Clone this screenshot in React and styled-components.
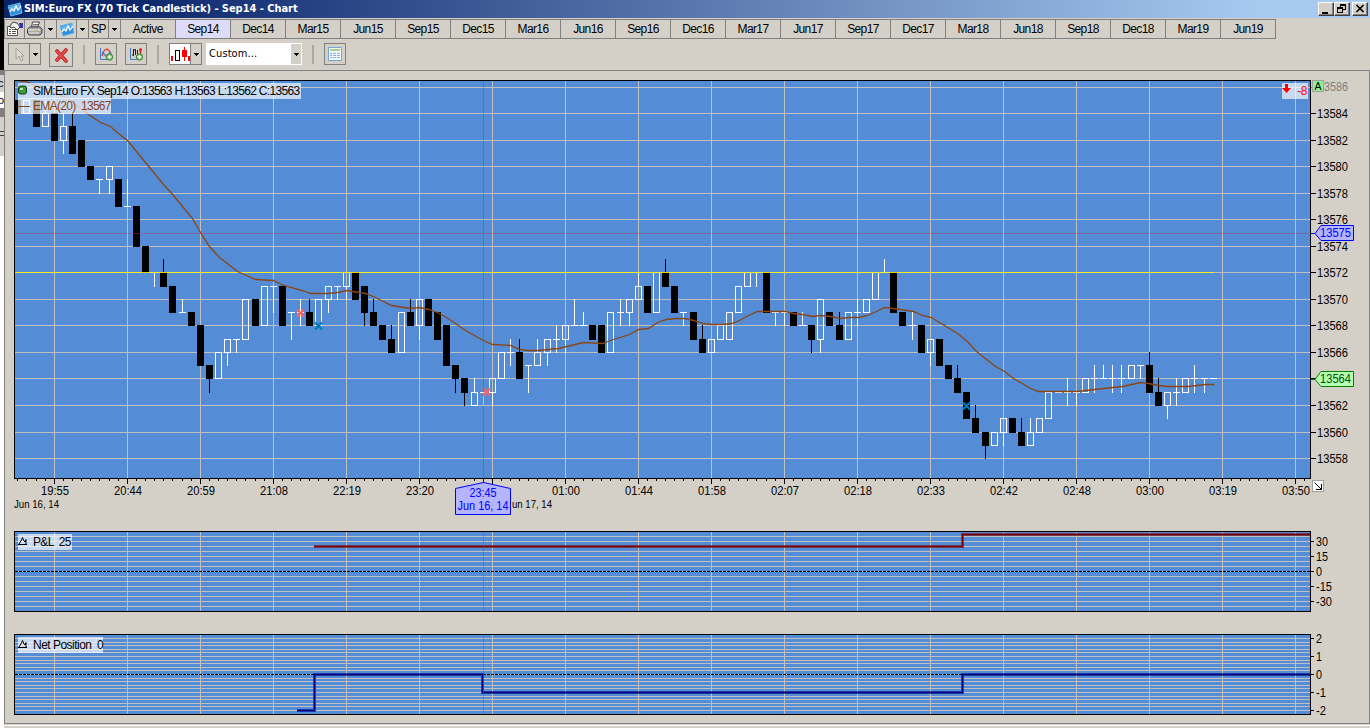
import { Fragment } from 'react';
import styled, { createGlobalStyle } from 'styled-components';

const GlobalStyle = createGlobalStyle`
  * {
    box-sizing: border-box;
  }
  body {
    margin: 0;
    overflow: hidden;
    background: #d4d0c8;
    font-family: 'Liberation Sans', Arial, sans-serif;
    font-size: 12px;
    color: #000;
  }
  svg {
    display: block;
  }
  svg text {
    font-family: 'Liberation Sans', Arial, sans-serif;
  }
`;

const Screen = styled.div`
  display: grid;
  grid-template-columns: 4px 1366px;
  width: 1370px;
  height: 728px;
`;

const Behind = styled.div`
  display: flex;
  flex-direction: column;
  overflow: hidden;
`;

const BehindBlock = styled.div`
  flex: none;
  height: ${({ $h }) => $h}px;
  background: ${({ $bg }) => $bg || '#d4d0c8'};
  font-size: 11px;
  line-height: ${({ $h }) => $h}px;
  text-indent: -2px;
`;

const Window = styled.div`
  display: flex;
  flex-direction: column;
  height: 728px;
`;

const TitleBar = styled.div`
  display: flex;
  align-items: center;
  height: 18px;
  padding: 0 2px 0 3px;
  background: linear-gradient(90deg, #0a246a 0%, #0a246a 8%, #a6caf0 92%);
`;

const Title = styled.h1`
  flex: 1;
  margin: 0 0 0 1px;
  font: bold 11px/16px 'DejaVu Sans Condensed', 'DejaVu Sans', sans-serif;
  font-stretch: condensed;
  letter-spacing: -0.04px;
  white-space: pre;
  color: #fff;
`;

const WindowButton = styled.button`
  width: 16px;
  height: 14px;
  padding: 0;
  margin-left: ${({ $gap }) => $gap || 0}px;
  border: 1px solid;
  border-color: #fff #404040 #404040 #fff;
  background: #d4d0c8;
  box-shadow: inset -1px -1px #808080;
`;

const TabBar = styled.div`
  display: flex;
  height: 20px;
  margin-top: 1px;
`;

const Cell = styled.div`
  display: flex;
  align-items: center;
  justify-content: center;
  width: ${({ $w }) => $w}px;
  border: 1px solid #808080;
  border-left-width: ${({ $first }) => ($first ? 1 : 0)}px;
  letter-spacing: -0.5px;
`;

const Tab = styled.div`
  width: 55px;
  border: 1px solid #808080;
  border-left: 0;
  background: ${({ $active }) => ($active ? '#dcdcf8' : 'transparent')};
  line-height: 19px;
  text-align: center;
  letter-spacing: ${({ $wide }) => ($wide ? -0.4 : -0.6)}px;
`;

const ToolBar = styled.div`
  display: flex;
  align-items: flex-start;
  height: 31px;
  padding: 4px 0 0 4px;
`;

const ToolButton = styled.div`
  display: flex;
  align-items: center;
  justify-content: center;
  width: ${({ $w }) => $w || 22}px;
  height: ${({ $h }) => $h || 22}px;
  margin-left: ${({ $gap }) => $gap || 0}px;
  border: 1px solid #808080;
  ${({ $joined }) => $joined && 'border-left: 0;'}
  ${({ $bg }) => $bg && `background: ${$bg};`}
`;

const Separator = styled.div`
  width: 2px;
  height: 19px;
  margin: 2px 0 0 10px;
  background: #aca8a0;
`;

const Select = styled.div`
  display: flex;
  justify-content: space-between;
  width: 96px;
  height: 22px;
  margin-left: 4px;
  padding: 1px 1px 1px 3px;
  background: #fff;
  font: 11px/20px 'DejaVu Sans Condensed', 'DejaVu Sans', sans-serif;
  font-stretch: condensed;
  letter-spacing: 0.1px;
`;

const SelectArrow = styled.div`
  display: flex;
  align-items: center;
  justify-content: center;
  width: 10px;
  background: #d4d0c8;
`;

const ChartArea = styled.main`
  height: 654px;
  padding: 9px 0 0 9px;
  border: 1px solid #808080;
`;

const Pane = styled.section`
  position: relative;
  display: grid;
  grid-template-columns: 1297px 58px;
  margin-bottom: ${({ $gap }) => $gap || 0}px;
`;

const Legends = styled.div`
  position: absolute;
  top: 3px;
  left: 4px;
  display: flex;
  flex-direction: column;
  align-items: flex-start;
`;

const Legend = styled.div`
  display: flex;
  align-items: center;
  width: ${({ $w }) => $w}px;
  height: 16px;
  margin-bottom: -1px;
  background: rgba(255, 255, 255, 0.68);
  color: ${({ $color }) => $color || '#000'};
  letter-spacing: ${({ $track }) => $track || -0.5}px;
  line-height: 16px;
  white-space: pre;
`;

const LegendIcon = styled.span`
  flex: none;
  width: 15px;
`;

const Change = styled.div`
  position: absolute;
  top: 3px;
  left: 1268px;
  display: flex;
  justify-content: space-between;
  width: 26px;
  height: 16px;
  padding-right: 1px;
  background: rgba(255, 255, 255, 0.68);
  color: #f00;
  line-height: 17px;
  letter-spacing: -0.5px;
`;

const StatusEdge = styled.div`
  height: 4px;
  border-top: 1px solid #d4d0c8;
  box-shadow: inset 0 1px #fff;
`;

const contracts = [
  'Active', 'Sep14', 'Dec14', 'Mar15', 'Jun15', 'Sep15', 'Dec15',
  'Mar16', 'Jun16', 'Sep16', 'Dec16', 'Mar17', 'Jun17', 'Sep17', 'Dec17',
  'Mar18', 'Jun18', 'Sep18', 'Dec18', 'Mar19', 'Jun19',
];

// one entry per bar: colour, body top, body bottom, high, low (prices - 13500)
const bars = `
b85,84 w85,84 b85,83 w84,83,85 b84,82 w83,82,84,81 b83,81,84 b82,80
b80,79 w79,79,79,78 w80,79,80,78 b79,77 w77,77,79 b77,74 b74,72 w72,72,72,71
b72,71,73 b71,69 w69,69,70 b69,68 b68,65 b65,64,65,63 w66,64 w67,66,67,65
w67,67,67,66 w70,67 b70,68 w71,68 w71,71,71,69 b71,68 w69,69,69,67 w69,69,70,68
b69,68,70 w70,68 w71,70,71,69 w71,71,71,70 w72,71,72,70 b72,70 b71,69,71,68 b69,68,70
b68,67 b67,66,68 w69,66 b69,68,70 w70,68,70,67 b70,68 b69,67 b68,65
b65,64,65,63 b64,63,64,62 w63,62,64 w63,63,63,62 w64,63,64,62 w66,64 w66,66,67,65 b66,64,67
w65,65,65,63 w66,65,67 w67,66,67,65 w67,67,68,66 w68,67,68,66 w68,68,70 w68,68,69 b68,67
b68,66 w69,66 w69,69,70,68 w70,69,70,68 w71,70,72 b71,69 w72,69 b72,71,73
b71,69 w69,69,69,68 b69,67 b67,66,68 w67,66 w68,67 w69,67 w71,69
w72,71 w72,72,72,71 b72,69 w69,69,69,68 w69,69,69,68 b69,68 w68,68,69 b68,67,68,66
w70,67,70,66 b69,68 b68,67,69 w69,67 w69,69,70,68 w70,69 w72,70 w72,72,73
b72,69 b69,68 w68,68,69,67 b68,66 w67,66,67,65 b67,65 b65,64 b64,63,65
b63,61 b61,60,62 b60,59,60,58 w60,59 w61,60,61,59 b61,60 b60,59,61 w60,59,61
w61,60 w63,61 w63,63 w63,63,64,62 w63,63,63,62 w64,63 w64,64,65,63 w64,64,65
w64,64,65,63 w64,64,65,63 w65,64 w65,65,65,64 b65,63,66 b63,62,64 w63,62,63,61 w63,63,64,62
w64,63 w64,64,65,63 w64,64,64,63 w64,64
`
  .trim()
  .split(/\s+/)
  .map((entry, i) => {
    const [top, bottom, high = top, low = bottom] = entry.slice(1).split(',').map(Number);
    return { k: i - 4, up: entry[0] === 'w', top, bottom, high, low };
  });

const ema =
  '17,80 25,81 45,89 67,98 88,114 100,122 110,126 118,133 127,140 136,151 145,162 163,184 173,195 182,206 192,218 200,232 209,246 219,257 228,264 237,271 246,275 255,279 273,280 283,285 302,290 310,293 328,293 337,292 346,290 365,293 375,297 391,305 410,308 419,307 428,309 437,312 446,317 455,323 465,330 474,335 483,340 492,344 510,345 519,349 527,350 538,350 558,348 583,342 602,343 610,340 629,334 638,329 648,328 657,322 666,319 675,318 684,318 693,320 703,323 712,324 722,324 731,323 739,320 748,315 757,311 785,311 793,313 802,314 812,316 820,315 830,316 840,318 848,317 858,317 867,315 876,311 884,307 893,308 913,311 922,315 931,317 939,322 949,328 957,333 967,341 976,351 986,359 995,366 1004,371 1013,378 1022,383 1030,388 1038,391 1077,391 1103,388 1122,386 1140,382 1148,383 1158,385 1167,386 1188,386 1205,384 1214,384';

const times = [
  '19:55', '20:44', '20:59', '21:08', '22:19', '23:20', '', '01:00', '01:44',
  '01:58', '02:07', '02:18', '02:33', '02:42', '02:48', '03:00', '03:19', '03:50',
];

const marks = [
  [300, 312, '#ff6060'],
  [318, 325, '#007ab8'],
  [486, 391, '#ff6060'],
  [966, 405, '#007ab8'],
];

const steps = [0, 9, 18, 27, 36, 45, 55, 64];
const barX = (k) => 54 + 73 * Math.floor(k / 8) + steps[((k % 8) + 8) % 8];
const priceY = (p) => Math.round(113.05 + 13.27 * (84 - p));
const range = (from, to, step = 1) =>
  Array.from({ length: Math.floor((to - from) / step) + 1 }, (_, i) => from + i * step);

const prices = range(58, 86, 2);
const pnlLines = range(536, 606, 5);
const netLines = range(-10, 10).map((n) => Math.round(674 + 3.6 * n));

function Label({ x, y, w, size = 12, fill = '#000', children }) {
  return (
    <text x={x} y={y} fontSize={size} fill={fill} textLength={w} lengthAdjust='spacingAndGlyphs'>
      {children}
    </text>
  );
}

function Caret() {
  return (
    <svg width='5' height='3' shapeRendering='crispEdges'>
      <path d='M0 0h5v1H0zM1 1h3v1H1zM2 2h1v1H2z' />
    </svg>
  );
}

function ChartIcon() {
  return (
    <svg width='16' height='15' viewBox='0 0 16 15'>
      <path d='M1 4L13 1l2 10L4 14z' fill='#2f8fd8' stroke='#66b8ee' />
      <path d='M2 5l11-3 .6 3L3 9z' fill='#63b5ee' />
      <path d='M3 10l2-3 2 2 2-5 2 4 3-4' fill='none' stroke='#fff' strokeWidth='1.2' />
    </svg>
  );
}

function PropertiesIcon() {
  return (
    <svg width='18' height='16' viewBox='0 0 18 16'>
      <path d='M1.5 5.5h10v9h-10z' fill='#fff' stroke='#555' />
      <path d='M3 8.5h2M6 8.5h4M3 10.500h2M6 10.500h4M3 12.500h2M6 12.500h4' stroke='#555' />
      <path d='M4 5l3-4 4 1 3 4-3 3-3-3-3 1z' fill='#eee' stroke='#444' />
      <path d='M13 2h4v5h-3z' fill='#34349c' />
    </svg>
  );
}

function PrinterIcon() {
  return (
    <svg width='17' height='16' viewBox='0 0 17 16'>
      <path d='M5.500 6l1-5h7l-2 5z' fill='#fff' stroke='#444' />
      <path d='M7 3.500h5M6.500 5h5' stroke='#777' />
      <path d='M1.500 8L4 6h10l2 2v4l-2 2H3l-1.500-2z' fill='#aaa' stroke='#444' />
      <path d='M2 9h12M3 12h10' stroke='#eee' />
      <path d='M10 10h2' stroke='#c8b400' />
    </svg>
  );
}

function PlusDot() {
  return (
    <>
      <circle cx='11.500' cy='11' r='3.200' fill='#6db45c' stroke='#4a8a3c' />
      <path d='M9.500 11h4M11.500 9v4' stroke='#fff' strokeWidth='1.300' />
    </>
  );
}

function StudyIcon({ bars: withBars }) {
  return (
    <svg width='16' height='16' viewBox='0 0 16 16'>
      <path d='M2.500 2v11.500H14' fill='none' stroke='#4878c8' />
      {withBars ? (
        <path d='M5.500 3v7M4 9h1.500M7.500 3v6M6 4h2M9.500 4v5' fill='none' stroke='#222' />
      ) : (
        <>
          <path d='M4 10c2-8 6-9 9-2' fill='none' stroke='#e04040' strokeWidth='1.400' />
          <path d='M4 6l4 4 5-4' fill='none' stroke='#3b7cc8' strokeWidth='1.400' />
        </>
      )}
      {withBars && <path d='M12.500 2v6M11 4h3' stroke='#d02020' strokeWidth='1.400' />}
      <PlusDot />
    </svg>
  );
}

function MountainIcon() {
  return (
    <svg width='11' height='12' viewBox='0 0 11 12'>
      <path d='M0 8.500h9M1 8l2.500-4 1-2.500L6 5l1 1 1-2.500V8' fill='none' stroke='#000' />
    </svg>
  );
}

function Grid({ top, height, lines }) {
  return (
    <>
      <rect x='14' y={top} width='1297' height={height} fill='#548dd5' />
      {range(0, 17).map((i) => (
        <rect key={i} x={54 + 73 * i} y={top} width='1' height={height} fill='#c0c0c0' />
      ))}
      {lines.map((y) => (
        <rect key={y} x='14' y={y} width='1297' height='1' fill='#c0c0c0' />
      ))}
    </>
  );
}

function Frame({ top, height }) {
  return (
    <>
      <rect x='483' y={top} width='1' height={height} fill='#b83060' opacity='0.4' />
      <rect x='14.5' y={top + 0.5} width='1296' height={height - 1} fill='none' stroke='#000' />
    </>
  );
}

function Candle({ k, up, top, bottom, high, low }) {
  const x = barX(k);
  const y1 = priceY(top);
  const y2 = priceY(bottom);
  const color = up ? '#fff' : '#000';
  return (
    <g fill={color}>
      {high > top && <rect x={x} y={priceY(high)} width='1' height={y1 - priceY(high)} />}
      {low < bottom && <rect x={x} y={y2} width='1' height={priceY(low) - y2 + 1} />}
      {up && top !== bottom ? (
        <rect x={x - 2.5} y={y1 + 0.5} width='6' height={y2 - y1} fill='none' stroke='#fff' />
      ) : (
        <rect x={x - 3} y={y1} width='7' height={y2 - y1 + 1} />
      )}
    </g>
  );
}

function PricePlot() {
  return (
    <svg width='1297' height='399' viewBox='14 80 1297 399' shapeRendering='crispEdges'>
      <Grid top={80} height={399} lines={prices.map(priceY)} />
      {bars.map((bar) => (
        <Candle key={bar.k} {...bar} />
      ))}
      <rect x='14' y='272' width='1200' height='1' fill='#ffee10' opacity='0.9' />
      <polyline
        points={ema}
        transform='translate(0.5 0.5)'
        fill='none'
        stroke='#8b4513'
        strokeWidth='1.3'
        shapeRendering='auto'
      />
      {marks.map(([x, y, color]) => (
        <path
          key={x}
          d={`M${x - 3} ${y - 2.5}l7 7M${x + 4} ${y - 2.5}l-7 7`}
          stroke={color}
          strokeWidth='2.2'
          shapeRendering='auto'
        />
      ))}
      <rect x='14' y='233' width='1297' height='1' fill='#b83060' opacity='0.42' />
      <Frame top={80} height={399} />
    </svg>
  );
}

function PriceAxis() {
  return (
    <svg width='58' height='399' viewBox='1311 80 58 399'>
      {prices.map((p) => (
        <Fragment key={p}>
          <rect x='1311' y={priceY(p)} width='5' height='1' fill={p === 86 ? '#808080' : '#000'} />
          {p !== 64 && p !== 86 && (
            <Label x='1317' y={priceY(p) + 5} w='31'>{13500 + p}</Label>
          )}
        </Fragment>
      ))}
      <Label x='1324' y='91' w='24' fill='#808080'>3586</Label>
      <rect x='1312.500' y='80.500' width='11' height='11' fill='#90ee90' stroke='#a0a0a0' />
      <Label x='1314.500' y='90' w='7' size={11}>A</Label>
      <path d='M1311 233.500h4l6-8h32.500v15h-32.500l-6-7' fill='#b4b4ff' stroke='#00f' />
      <Label x='1320' y='237' w='31' fill='#00f'>13575</Label>
      <path d='M1311 379.500h4l6-8h32.500v15h-32.500l-6-7' fill='#b4ffb4' stroke='#008000' />
      <Label x='1320' y='383' w='31' fill='#005000'>13564</Label>
    </svg>
  );
}

function TimeAxis() {
  return (
    <svg width='1355' height='52' viewBox='14 479 1355 52'>
      {range(-4, 137).map((k) => (
        <rect key={k} x={barX(k)} y='479' width='1' height={k % 8 === 0 ? 5 : 2} />
      ))}
      {times.map((time, i) =>
        time ? (
          <Label key={time} x={41 + 73 * i} y='495' w='28'>
            {time}
          </Label>
        ) : null
      )}
      <Label x='14' y='508' w='45' size={11}>Jun 16, 14</Label>
      <Label x='512' y='508' w='40' size={11}>un 17, 14</Label>
      <path d='M483.500 479v3.500l27 6v26h-55v-26l28-6' fill='#b4b4ff' stroke='#00f' />
      <Label x='469.500' y='497' w='27' fill='#00f'>23:45</Label>
      <Label x='457.500' y='510' w='51' fill='#00f'>Jun 16, 14</Label>
      <rect x='1312.500' y='480.500' width='11' height='11' fill='#fff' stroke='#a0a0a0' />
      <path d='M1314.500 482.500l7 7M1316 489.500h5.500V484' fill='none' stroke='#000' />
    </svg>
  );
}

function ZeroLine({ y }) {
  return <path d={`M15 ${y + 0.5}H1311`} stroke='#000' strokeDasharray='3 1' />;
}

function StepLine({ d, color }) {
  return (
    <g fill='none' stroke={color}>
      <path d={d} strokeWidth='3' opacity='0.6' />
      <path d={d} strokeWidth='1' />
    </g>
  );
}

function StudyPlot({ top, lines, zero, path, color }) {
  return (
    <svg width='1297' height='81' viewBox={`14 ${top} 1297 81`} shapeRendering='crispEdges'>
      <Grid top={top} height={81} lines={lines} />
      <ZeroLine y={zero} />
      <StepLine d={path} color={color} />
      <Frame top={top} height={81} />
    </svg>
  );
}

function StudyAxis({ top, ticks }) {
  return (
    <svg width='58' height='81' viewBox={`1311 ${top} 58 81`} overflow='visible'>
      {ticks.map(([y, value]) => (
        <Fragment key={value}>
          <rect x='1311' y={y} width='3' height='1' />
          <Label x='1316' y={y + 5} w={value.replace('-', '').length * 6 + (value[0] === '-' ? 4 : 0)}>
            {value}
          </Label>
        </Fragment>
      ))}
    </svg>
  );
}

function App() {
  return (
    <Screen>
      <GlobalStyle />
      <Behind>
        <BehindBlock $h={70} $bg='#000' />
        <BehindBlock $h={5} $bg='#808080' />
        <BehindBlock $h={17}>c</BehindBlock>
        <BehindBlock $h={16} $bg='#fff'>o</BehindBlock>
        <BehindBlock $h={9} $bg='#808080' />
        <BehindBlock $h={14} />
        <BehindBlock $h={1} $bg='#404040' />
        <BehindBlock $h={3} />
        <BehindBlock $h={1} $bg='#404040' />
        <BehindBlock $h={20} />
        <BehindBlock $h={572} $bg='#fff' />
      </Behind>
      <Window>
        <TitleBar>
          <ChartIcon />
          <Title>SIM:Euro FX (70 Tick Candlestick) - Sep14 - Chart</Title>
          <WindowButton>
            <svg width='12' height='11'>
              <path d='M3 8h6v2H3z' />
            </svg>
          </WindowButton>
          <WindowButton>
            <svg width='14' height='12' fill='none' stroke='#000' shapeRendering='crispEdges'>
              <path d='M5.500 4V1.500h5v5H8M5 2.500h6M2.500 4.500h5v5h-5zM2 5.500h6' />
            </svg>
          </WindowButton>
          <WindowButton $gap={2}>
            <svg width='14' height='12'>
              <path d='M3.500 2l7 7M10.500 2l-7 7' stroke='#000' strokeWidth='1.700' />
            </svg>
          </WindowButton>
        </TitleBar>
        <TabBar>
          <Cell $w={21} $first><PropertiesIcon /></Cell>
          <Cell $w={20}><PrinterIcon /></Cell>
          <Cell $w={12}><Caret /></Cell>
          <Cell $w={20}><ChartIcon /></Cell>
          <Cell $w={12}><Caret /></Cell>
          <Cell $w={20}>SP</Cell>
          <Cell $w={12}><Caret /></Cell>
          {contracts.map((name) => (
            <Tab key={name} $active={name === 'Sep14'} $wide={name === 'Active'}>
              {name}
            </Tab>
          ))}
        </TabBar>
        <ToolBar>
          <ToolButton>
            <svg width='12' height='16'>
              <path d='M3 2v11l3-3 2 5 2-1-2-4h3z' fill='#dedcd8' stroke='#a5a29c' />
            </svg>
          </ToolButton>
          <ToolButton $w={11} $joined><Caret /></ToolButton>
          <ToolButton $w={24} $h={24} $gap={8}>
            <svg width='15' height='15'>
              <path d='M3 3l9 10M12 2L3 12' stroke='#a82020' strokeWidth='3.600' strokeLinecap='round' />
              <path d='M3 3l9 10M12 2L3 12' stroke='#e84848' strokeWidth='2.400' strokeLinecap='round' />
            </svg>
          </ToolButton>
          <Separator />
          <ToolButton $gap={10}><StudyIcon /></ToolButton>
          <ToolButton $gap={8}><StudyIcon bars /></ToolButton>
          <Separator />
          <ToolButton $gap={10} $bg='#fff'>
            <svg width='20' height='20' shapeRendering='crispEdges'>
              <path d='M1 12h2v5H1zM18 12h2v5h-2zM12 6h5v7h-5zM14 3h1v14h-1z' fill='#f00' />
              <path d='M5.500 6.500h4v10h-4z' fill='#fff' stroke='#000' />
            </svg>
          </ToolButton>
          <ToolButton $w={11} $joined><Caret /></ToolButton>
          <Select>
            Custom...
            <SelectArrow><Caret /></SelectArrow>
          </Select>
          <Separator />
          <ToolButton $gap={10}>
            <svg width='16' height='16'>
              <path d='M1.500 1.500h13v13h-13z' fill='#f2f8fd' stroke='#76a4d4' />
              <path d='M3 3h10v2H3z' fill='#a9d18c' />
              <path d='M3 7.500h2M6 7.500h3M10 7.500h3M3 9.500h2M6 9.500h3M10 9.500h3M3 11.500h2M6 11.500h3M10 11.500h3' stroke='#84b3dd' />
            </svg>
          </ToolButton>
        </ToolBar>
        <ChartArea>
          <Pane>
            <PricePlot />
            <PriceAxis />
            <Legends>
              <Legend $w={283} $track={-0.69}>
                <LegendIcon>
                  <svg width='9' height='12'>
                    <rect x='0.500' y='1' width='8' height='8' rx='2' fill='#3d9838' stroke='#103c10' />
                    <path d='M2 3h3v2H2z' fill='#b8e8b0' />
                  </svg>
                </LegendIcon>
                SIM:Euro FX Sep14 O:13563 H:13563 L:13562 C:13563
              </Legend>
              <Legend $w={93} $color='#8b4513' $track={-0.68}>
                <LegendIcon>
                  <svg width='12' height='3'>
                    <path d='M0 1.500h12' stroke='#8b4513' />
                  </svg>
                </LegendIcon>
                {'EMA(20)  13567'}
              </Legend>
            </Legends>
            <Change>
              <svg width='9' height='12'>
                <path d='M3 1h3v4h3L4.500 10 0 5h3z' fill='#f00' />
              </svg>
              -8
            </Change>
          </Pane>
          <TimeAxis />
          <Pane $gap={22}>
            <StudyPlot
              top={531}
              lines={pnlLines}
              zero={571}
              path='M314 546.5H962.5V534.5H1311'
              color='#800000'
            />
            <StudyAxis
              top={531}
              ticks={[[541, '30'], [556, '15'], [571, '0'], [586, '-15'], [601, '-30']]}
            />
            <Legends>
              <Legend $w={54} $track={-0.65}>
                <LegendIcon><MountainIcon /></LegendIcon>
                {'P&L  25'}
              </Legend>
            </Legends>
          </Pane>
          <Pane>
            <StudyPlot
              top={634}
              lines={netLines}
              zero={674}
              path='M297 710.5H314.5V674.5H482.5V692.5H962.5V674.5H1311'
              color='#000080'
            />
            <StudyAxis
              top={634}
              ticks={[[638, '2'], [656, '1'], [674, '0'], [692, '-1'], [710, '-2']]}
            />
            <Legends>
              <Legend $w={85} $track={-0.52}>
                <LegendIcon><MountainIcon /></LegendIcon>
                {'Net Position  0'}
              </Legend>
            </Legends>
          </Pane>
        </ChartArea>
        <StatusEdge />
      </Window>
    </Screen>
  );
}

export default App;
